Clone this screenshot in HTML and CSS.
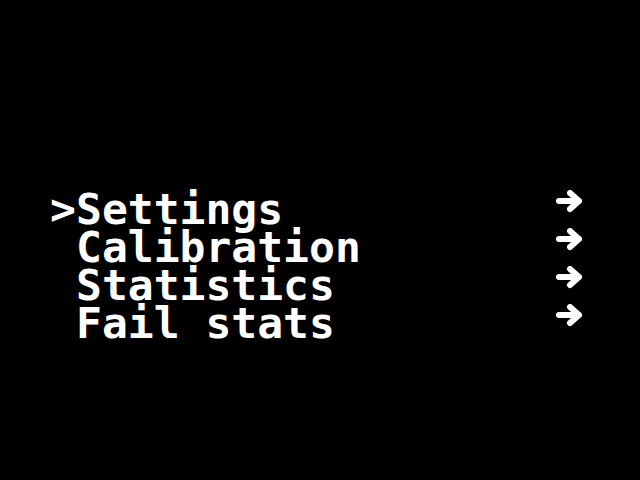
FILE: index.html
```html
<!DOCTYPE html>
<html>
<head>
<meta charset="utf-8">
<link rel="stylesheet" href="styles.css">
</head>
<body>
<div class="screen">
  <ul class="menu">
    <li class="item selected"><span class="label"><span class="cursor">&gt;</span>Settings</span><svg class="arrow" viewBox="0 0 28 24"><path d="M3 11 H23 M14 3 L23 11 L14 19"/></svg></li>
    <li class="item"><span class="label"><span class="cursor"> </span>Calibration</span><svg class="arrow" viewBox="0 0 28 24"><path d="M3 11 H23 M14 3 L23 11 L14 19"/></svg></li>
    <li class="item"><span class="label"><span class="cursor"> </span>Statistics</span><svg class="arrow" viewBox="0 0 28 24"><path d="M3 11 H23 M14 3 L23 11 L14 19"/></svg></li>
    <li class="item"><span class="label"><span class="cursor"> </span>Fail stats</span><svg class="arrow" viewBox="0 0 28 24"><path d="M3 11 H23 M14 3 L23 11 L14 19"/></svg></li>
  </ul>
</div>
</body>
</html>
```

FILE: styles.css
```css
html, body {
  margin: 0;
  padding: 0;
  background: #000;
}
.screen {
  width: 640px;
  height: 480px;
  background: #000;
  box-sizing: border-box;
  padding: 190px 0 0 50px;
}
.menu {
  list-style: none;
  margin: 0;
  padding: 0;
  width: 534px;
  display: flex;
  flex-direction: column;
}
.item {
  display: flex;
  justify-content: space-between;
  align-items: flex-start;
  height: 38px;
  font-family: "DejaVu Sans Mono", "Liberation Mono", monospace;
  font-weight: bold;
  font-size: 43px;
  line-height: 38px;
  color: #fff;
  white-space: pre;
}
.cursor {
  display: inline-block;
  width: 26px;
}
.arrow {
  width: 28px;
  height: 24px;
  margin-top: 0;
  fill: none;
  stroke: #fff;
  stroke-width: 6;
  stroke-linecap: round;
  stroke-linejoin: round;
}
```
